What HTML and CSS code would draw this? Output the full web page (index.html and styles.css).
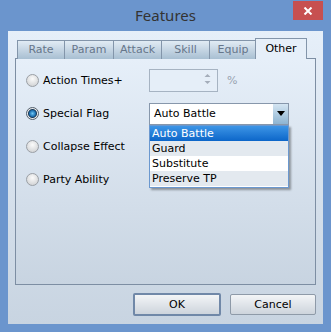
FILE: index.html
```html
<!DOCTYPE html>
<html lang="en">
<head>
    <meta charset="UTF-8">
    <title>Features</title>
    <link rel="stylesheet" href="styles.css">
</head>
<body>

    <div class="window">
        <!-- Title Bar -->
        <div class="title-bar">
            <span></span>
            <span class="title">Features</span>
            <button class="close-btn" aria-label="Close">
                <svg width="10" height="8" viewBox="0 0 10 8">
                    <path d="M1.5 0.5 L8.5 7.5 M8.5 0.5 L1.5 7.5" stroke="#fff" stroke-width="2"/>
                </svg>
            </button>
        </div>

        <!-- Client Area -->
        <div class="client">
            <div class="tabs">
                <div class="tab w47">Rate</div>
                <div class="tab w49">Param</div>
                <div class="tab w48">Attack</div>
                <div class="tab w48">Skill</div>
                <div class="tab w47">Equip</div>
                <div class="tab active">Other</div>
            </div>

            <div class="panel">
                <div class="row">
                    <label class="option"><span class="radio"></span>Action Times+</label>
                    <div class="field">
                        <div class="spin">
                            <span class="spin-arrows">
                                <svg width="7" height="12" viewBox="0 0 7 12">
                                    <path d="M3.5 1 L6.5 4 L0.5 4 Z" fill="#a4adba"/>
                                    <path d="M0.5 8 L6.5 8 L3.5 11 Z" fill="#a4adba"/>
                                </svg>
                            </span>
                        </div>
                        <span class="unit">%</span>
                    </div>
                </div>

                <div class="row">
                    <label class="option"><span class="radio checked"></span>Special Flag</label>
                    <div class="field">
                        <div class="combo">
                            <span class="combo-value">Auto Battle</span>
                            <span class="combo-btn">
                                <svg width="8" height="5" viewBox="0 0 8 5">
                                    <path d="M0 0 L8 0 L4 5 Z" fill="#000"/>
                                </svg>
                            </span>
                            <ul class="dropdown">
                                <li class="selected">Auto Battle</li>
                                <li>Guard</li>
                                <li class="alt">Substitute</li>
                                <li>Preserve TP</li>
                            </ul>
                        </div>
                    </div>
                </div>

                <div class="row">
                    <label class="option"><span class="radio"></span>Collapse Effect</label>
                </div>

                <div class="row">
                    <label class="option"><span class="radio"></span>Party Ability</label>
                </div>
            </div>

            <div class="actions">
                <button class="btn default">OK</button>
                <button class="btn cancel">Cancel</button>
            </div>
        </div>
    </div>

</body>
</html>
```

FILE: styles.css
```css
* {
    margin: 0;
    padding: 0;
    box-sizing: border-box;
}

body {
    background: #6b95cd;
    font-family: 'DejaVu Sans', Tahoma, sans-serif;
    font-size: 11px;
    color: #000;
}

.window {
    width: 331px;
    height: 332px;
    background: #6b95cd;
    display: flex;
    flex-direction: column;
}

/* Title Bar */
.title-bar {
    height: 31px;
    display: grid;
    grid-template-columns: 1fr auto 1fr;
    padding: 0 8px;
}

.title {
    font-family: 'Noto Sans', 'Open Sans', sans-serif;
    font-size: 15px;
    color: #333;
    line-height: 30px;
}

.close-btn {
    justify-self: end;
    align-self: start;
    margin-top: 1px;
    width: 30px;
    height: 19px;
    border: none;
    background: #c75050;
    display: flex;
    align-items: center;
    justify-content: center;
}

/* Client Area */
.client {
    flex: 1;
    margin: 0 8px 8px;
    padding: 7px 7px 8px;
    background: linear-gradient(to bottom, #e6eff9, #c8d4e1);
    display: flex;
    flex-direction: column;
}

.tabs {
    height: 20px;
    display: flex;
    align-items: flex-end;
    padding-left: 2px;
    position: relative;
    z-index: 1;
}

.tab {
    height: 19px;
    margin-bottom: -1px;
    border: 1px solid #8395aa;
    border-bottom: none;
    margin-right: -1px;
    background: linear-gradient(to bottom, #e1ebf4, #a8bfd2);
    color: #66768a;
    text-align: center;
    line-height: 18px;
}

.w47 { width: 48px; }
.w48 { width: 49px; }
.w49 { width: 50px; }

.tab.active {
    width: 52px;
    height: 21px;
    margin-left: -1px;
    background: #e6eff9;
    color: #000;
    line-height: 20px;
}

.panel {
    height: 227px;
    border: 1px solid #7d8ea3;
    background: linear-gradient(to bottom, #e6eff9, #c8d4e1);
    padding: 5px 0 0 10px;
}

.row {
    height: 33px;
    display: flex;
    align-items: center;
}

.option {
    width: 123px;
    display: flex;
    align-items: center;
    gap: 4px;
}

.radio {
    width: 13px;
    height: 13px;
    border-radius: 50%;
    border: 1px solid #9a9fa5;
    background: radial-gradient(circle at 50% 35%, #fbfbfb, #c9cbcd);
}

.radio.checked {
    border-color: #55606c;
    background: radial-gradient(circle, #6fc7f6 0, #1c6fb0 3px, #1a3b5a 4px, #e8eaec 5px, #c8ccd0 100%);
}

.field {
    display: flex;
    align-items: center;
}

.spin {
    width: 69px;
    height: 23px;
    border: 1px solid #a6b3c2;
    background: #e5eef8;
    display: flex;
    justify-content: flex-end;
    align-items: center;
    padding-right: 6px;
}

.unit {
    margin-left: 9px;
    color: #98a3b0;
}

.combo {
    width: 140px;
    height: 22px;
    border: 1px solid #8797ab;
    background: #fff;
    display: flex;
    align-items: center;
    position: relative;
}

.combo-value {
    flex: 1;
    padding-left: 4px;
}

.combo-btn {
    width: 15px;
    height: 20px;
    background: linear-gradient(to bottom, #d4e5f2, #8db4d2);
    display: flex;
    align-items: center;
    justify-content: center;
}

/* Dropdown list over the panel */
.dropdown {
    position: absolute;
    top: 21px;
    left: -1px;
    width: 140px;
    list-style: none;
    background: #fff;
    border: 1px solid #6b98cf;
    box-shadow: 2px 2px 2px rgba(0, 0, 0, 0.35);
    padding-bottom: 1px;
}

.dropdown li {
    height: 15px;
    line-height: 15px;
    padding-left: 2px;
    background: #e3e9ef;
}

.dropdown li.alt {
    background: #fff;
}

.dropdown li.selected {
    background: linear-gradient(to bottom, #3d95e6, #0c66c9);
    color: #fff;
}

/* Buttons */
.actions {
    margin-top: 9px;
    display: flex;
    justify-content: flex-end;
    gap: 9px;
}

.btn {
    width: 86px;
    height: 21px;
    border: 1px solid #8e9aa8;
    border-radius: 2px;
    background: linear-gradient(to bottom, #f3f5f7, #cdd4dc);
    font-family: 'DejaVu Sans', Tahoma, sans-serif;
    font-size: 11px;
    color: #000;
}

.btn.default {
    width: 88px;
    height: 23px;
    margin-top: -1px;
    border: 2px solid #7088a8;
}
```
